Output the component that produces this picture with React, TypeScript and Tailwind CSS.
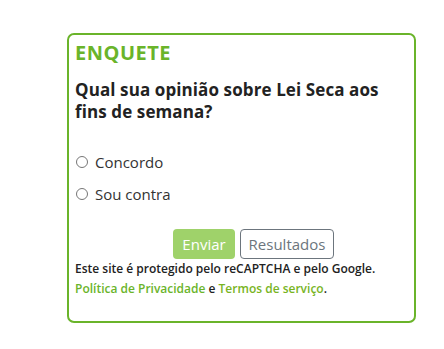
export default function App() {
  return (
    <div className="w-[444px] h-[349px] bg-white overflow-hidden font-['Open_Sans',sans-serif]">
      <div className="ml-[67px] mt-[33px] w-[349px] h-[290px] border-2 border-[#6ab42a] rounded-[7px] px-[6px] pt-[6px]">
        <h2 className="text-[20px] leading-[24px] font-bold tracking-[0.5px] text-[#6ab42a]">ENQUETE</h2>
        <p className="mt-[14px] text-[17px] leading-[22px] font-bold tracking-[0.1px] text-[#222222]">
          Qual sua opinião sobre Lei Seca aos fins de semana?
        </p>
        <div className="mt-[29px] flex flex-col gap-[12px]">
          {["Concordo", "Sou contra"].map((opt) => (
            <label key={opt} className="flex items-center h-[20px] text-[15px] text-[#333333]">
              <span className="ml-[1px] w-[12px] h-[12px] rounded-full border border-[#767676] bg-white" />
              <span className="ml-[7px]">{opt}</span>
            </label>
          ))}
        </div>
        <div className="mt-[25px] ml-[98px] flex gap-[5px]">
          <button className="h-[30px] w-[62px] rounded-[4px] bg-[#9fd26a] text-white text-[15px]">
            Enviar
          </button>
          <button className="h-[30px] w-[94px] rounded-[4px] border border-[#6c757d] text-[#6c757d] text-[15px]">
            Resultados
          </button>
        </div>
        <p className="mt-0 text-[12px] leading-[20px] font-semibold text-[#222222]">
          Este site é protegido pelo reCAPTCHA e pelo Google.
        </p>
        <p className="text-[12px] leading-[20px] font-semibold text-[#222222]">
          <a className="text-[#6ab42a]">Política de Privacidade</a> e{" "}
          <a className="text-[#78b41e]">Termos de serviço</a>.
        </p>
      </div>
    </div>
  );
}
